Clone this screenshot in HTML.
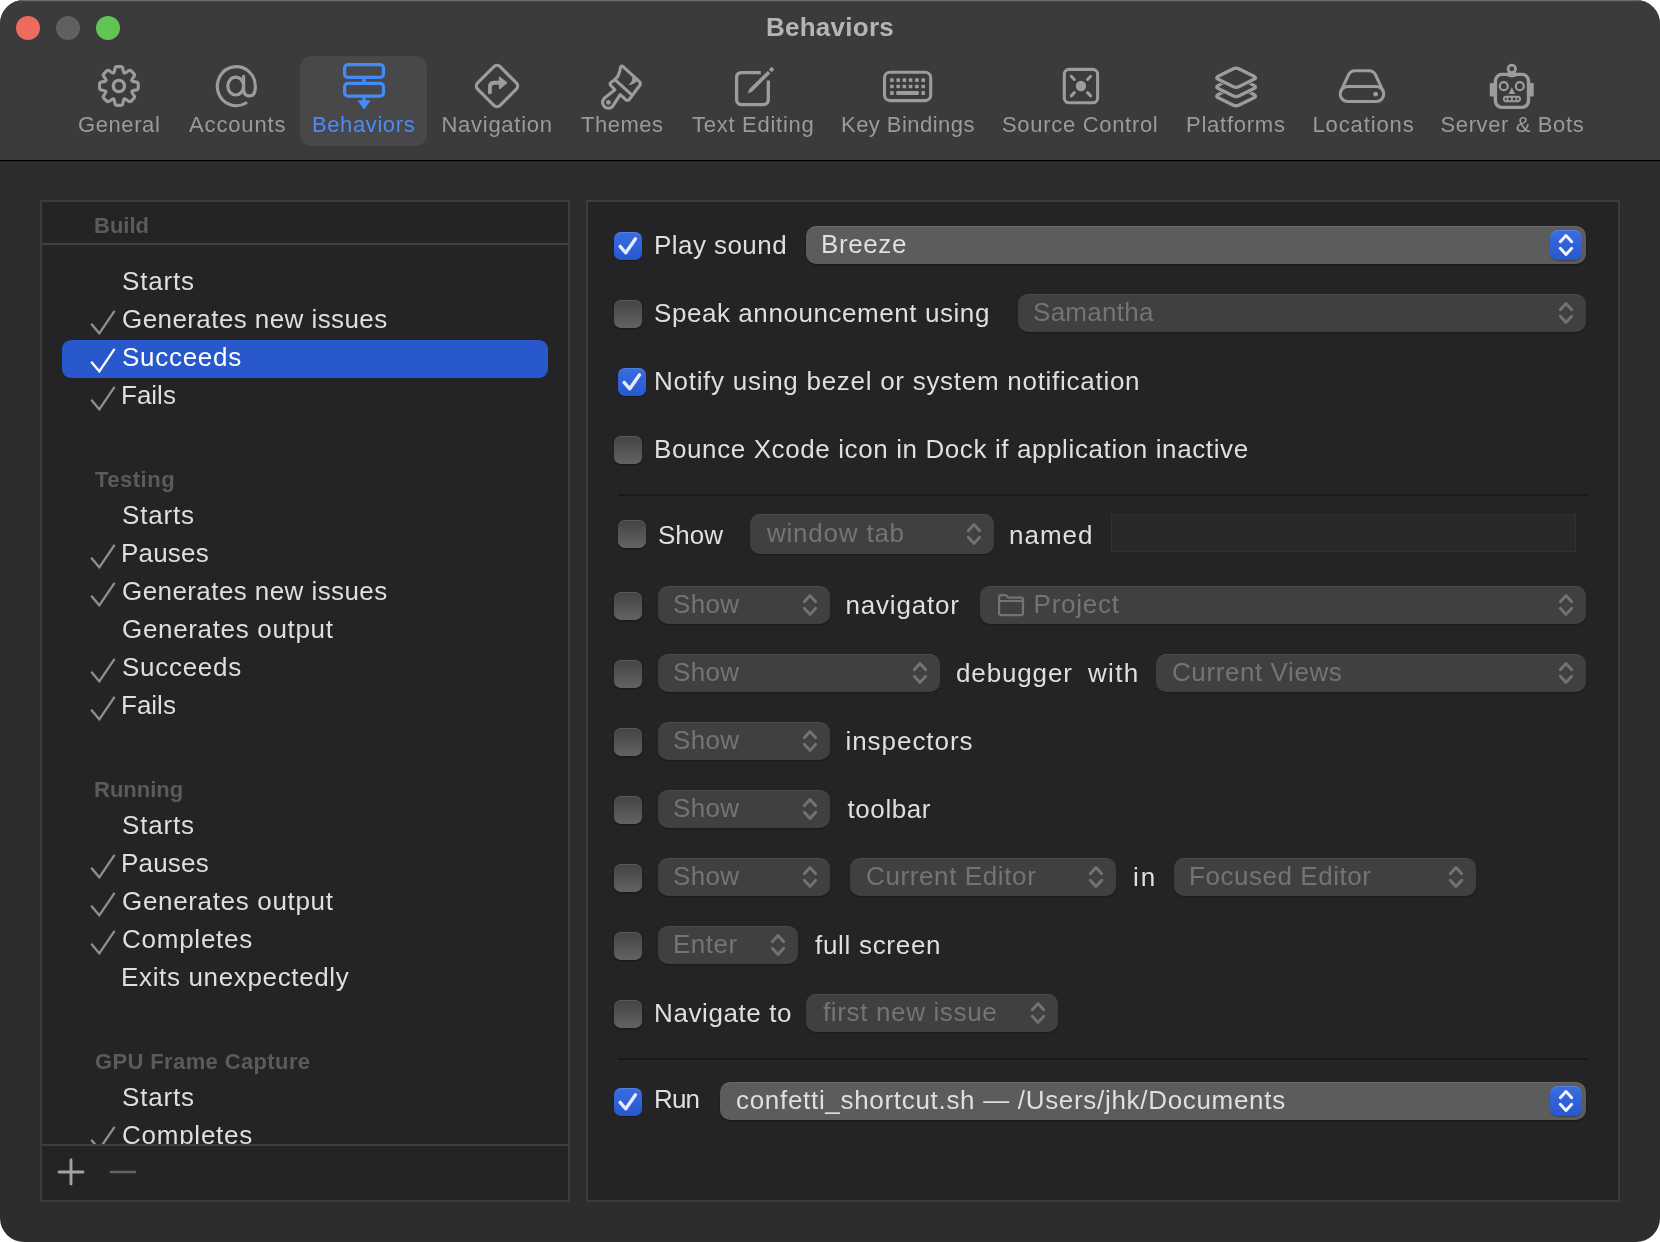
<!DOCTYPE html>
<html><head><meta charset="utf-8"><title>Behaviors</title>
<style>
html,body{margin:0;padding:0;background:#ffffff;}
body{width:1660px;height:1242px;overflow:hidden;position:relative;font-family:"Liberation Sans",sans-serif;}
#win{will-change:transform;position:absolute;left:0;top:0;width:1660px;height:1242px;border-radius:24px;overflow:hidden;background:#2d2d2f;}
.t{position:absolute;white-space:pre;line-height:1;}
svg{position:absolute;overflow:visible;}

.cb{position:absolute;width:28px;height:28px;border-radius:7px;box-sizing:border-box;}
.cb.off{background:linear-gradient(#434345,#636365);box-shadow:0 1px 1.5px rgba(0,0,0,.4), inset 0 1px 0 rgba(255,255,255,.13);}
.cb.on{background:linear-gradient(#3a6de0,#2757cf);box-shadow:0 1px 1px rgba(0,0,0,.35), inset 0 1px 0 rgba(255,255,255,.12);}
.pop{position:absolute;border-radius:10px;box-sizing:border-box;}
.pop.dis{background:#404042;box-shadow:0 1px 1.5px rgba(0,0,0,.3), inset 0 1px 0 rgba(255,255,255,.06);}
.pop.en{background:#5c5c5e;box-shadow:0 1px 1.5px rgba(0,0,0,.45), inset 0 1px 0 rgba(255,255,255,.08);}
.step{position:absolute;width:32px;height:30px;border-radius:8px;background:linear-gradient(#3a6de0,#2757cf);box-shadow:0 1px 1px rgba(0,0,0,.3), inset 0 1px 0 rgba(255,255,255,.15);}

</style></head><body><div id="win">
<div class="" style="position:absolute;left:0px;top:0px;width:1660px;height:160px;background:#3b3b3d;"></div>
<div class="" style="position:absolute;left:0px;top:0px;width:1660px;height:1px;background:#69696b;"></div>
<div class="" style="position:absolute;left:0px;top:1px;width:1660px;height:1px;background:#4a4a4c;"></div>
<div class="" style="position:absolute;left:0px;top:160px;width:1660px;height:1px;background:#000;"></div>
<div class="" style="position:absolute;left:0px;top:161px;width:1660px;height:1px;background:#252527;"></div>
<div class="" style="position:absolute;left:16px;top:16px;width:24px;height:24px;border-radius:50%;background:#ec6a5e;"></div>
<div class="" style="position:absolute;left:56px;top:16px;width:24px;height:24px;border-radius:50%;background:#606062;"></div>
<div class="" style="position:absolute;left:96px;top:16px;width:24px;height:24px;border-radius:50%;background:#61c554;"></div>
<span class="t" style="left:766.00px;top:14.49px;font-size:26px;letter-spacing:0.250px;color:#b5b5b7;font-weight:bold;">Behaviors</span>
<div class="" style="position:absolute;left:300px;top:56px;width:127px;height:90px;border-radius:12px;background:#48484a;"></div>
<span class="t" style="left:78.00px;top:113.88px;font-size:22px;letter-spacing:0.583px;color:#9b9b9d;">General</span>
<span class="t" style="left:189.00px;top:113.88px;font-size:22px;letter-spacing:0.857px;color:#9b9b9d;">Accounts</span>
<span class="t" style="left:312.00px;top:113.88px;font-size:22px;letter-spacing:0.600px;color:#4a8cf7;">Behaviors</span>
<span class="t" style="left:441.50px;top:113.88px;font-size:22px;letter-spacing:0.722px;color:#9b9b9d;">Navigation</span>
<span class="t" style="left:581.00px;top:113.88px;font-size:22px;letter-spacing:0.500px;color:#9b9b9d;">Themes</span>
<span class="t" style="left:692.00px;top:113.88px;font-size:22px;letter-spacing:0.727px;color:#9b9b9d;">Text Editing</span>
<span class="t" style="left:841.00px;top:113.88px;font-size:22px;letter-spacing:0.455px;color:#9b9b9d;">Key Bindings</span>
<span class="t" style="left:1002.00px;top:113.88px;font-size:22px;letter-spacing:0.692px;color:#9b9b9d;">Source Control</span>
<span class="t" style="left:1186.00px;top:113.88px;font-size:22px;letter-spacing:0.750px;color:#9b9b9d;">Platforms</span>
<span class="t" style="left:1312.50px;top:113.88px;font-size:22px;letter-spacing:0.875px;color:#9b9b9d;">Locations</span>
<span class="t" style="left:1440.50px;top:113.88px;font-size:22px;letter-spacing:0.625px;color:#9b9b9d;">Server &amp; Bots</span>
<svg style="left:79px;top:56px" width="80" height="60" viewBox="0 0 80 60"><path d="M34.55 17.08 Q35.16 16.83 35.50 14.96 L35.94 12.51 Q36.28 10.64 38.18 10.64 L41.62 10.64 Q43.52 10.64 43.86 12.51 L44.30 14.96 Q44.64 16.83 45.25 17.08 L45.25 17.08 Q45.86 17.33 47.42 16.25 L49.47 14.83 Q51.03 13.75 52.37 15.09 L54.81 17.53 Q56.15 18.87 55.07 20.43 L53.65 22.48 Q52.57 24.04 52.82 24.65 L52.82 24.65 Q53.07 25.26 54.94 25.60 L57.39 26.04 Q59.26 26.38 59.26 28.28 L59.26 31.72 Q59.26 33.62 57.39 33.96 L54.94 34.40 Q53.07 34.74 52.82 35.35 L52.82 35.35 Q52.57 35.96 53.65 37.52 L55.07 39.57 Q56.15 41.13 54.81 42.47 L52.37 44.91 Q51.03 46.25 49.47 45.17 L47.42 43.75 Q45.86 42.67 45.25 42.92 L45.25 42.92 Q44.64 43.17 44.30 45.04 L43.86 47.49 Q43.52 49.36 41.62 49.36 L38.18 49.36 Q36.28 49.36 35.94 47.49 L35.50 45.04 Q35.16 43.17 34.55 42.92 L34.55 42.92 Q33.94 42.67 32.38 43.75 L30.33 45.17 Q28.77 46.25 27.43 44.91 L24.99 42.47 Q23.65 41.13 24.73 39.57 L26.15 37.52 Q27.23 35.96 26.98 35.35 L26.98 35.35 Q26.73 34.74 24.86 34.40 L22.41 33.96 Q20.54 33.62 20.54 31.72 L20.54 28.28 Q20.54 26.38 22.41 26.04 L24.86 25.60 Q26.73 25.26 26.98 24.65 L26.98 24.65 Q27.23 24.04 26.15 22.48 L24.73 20.43 Q23.65 18.87 24.99 17.53 L27.43 15.09 Q28.77 13.75 30.33 14.83 L32.38 16.25 Q33.94 17.33 34.55 17.08 Z" fill="none" stroke="#9c9c9e" stroke-width="3.1" stroke-linecap="round" stroke-linejoin="round" /><circle cx="39.9" cy="30.0" r="5.6" fill="none" stroke="#9c9c9e" stroke-width="3.4"/></svg>
<svg style="left:197px;top:56px" width="80" height="60" viewBox="0 0 80 60"><path d="M 48.9 47.0 A 19 19.5 0 1 1 58.3 30.9 C 58.3 36.9 56 39.9 52.4 39.9 C 48.6 39.9 46.6 37.5 46.6 33 L 46.6 20.3" fill="none" stroke="#9c9c9e" stroke-width="3.2" stroke-linecap="round" stroke-linejoin="round" /><ellipse cx="38.7" cy="30.1" rx="7.9" ry="8.9" fill="none" stroke="#9c9c9e" stroke-width="3.2"/></svg>
<svg style="left:323px;top:56px" width="80" height="60" viewBox="0 0 80 60"><rect x="21.6" y="8.6" width="38.9" height="12.8" rx="3.4" fill="none" stroke="#448af8" stroke-width="3.2"/><rect x="21.6" y="27.4" width="38.9" height="12.8" rx="3.4" fill="none" stroke="#448af8" stroke-width="3.2"/><path d="M41.1 21.4 V27.4 M41.1 40.2 V46" stroke="#448af8" stroke-width="3.4" fill="none"/><path d="M35.9 45 L46.3 45 L41.1 52.3 Z" fill="#448af8" stroke="#448af8" stroke-width="1.6" stroke-linejoin="round"/></svg>
<svg style="left:457px;top:56px" width="80" height="60" viewBox="0 0 80 60"><rect x="24.1" y="14.2" width="31.8" height="31.8" rx="4.4" fill="none" stroke="#9c9c9e" stroke-width="3.2" transform="rotate(45 40 30.1)"/><path d="M32.9 36.4 V31 Q32.9 26.8 37.1 26.8 H43" fill="none" stroke="#9c9c9e" stroke-width="3.9" stroke-linecap="round" stroke-linejoin="round" /><path d="M42.6 21.2 L49.6 26.8 L42.6 32.6 Z" fill="#9c9c9e" stroke="#9c9c9e" stroke-width="1.4" stroke-linejoin="round"/></svg>
<svg style="left:582px;top:56px" width="80" height="60" viewBox="0 0 80 60"><path d="M 38.3 12.2 Q 38.9 8.6 41.6 11.1 L 57.2 25.3 Q 59.4 27.4 57.5 29.7 L 47.4 43.2 Q 45.7 45.3 43.6 43.5 L 38.2 38.6 L 30.6 50.4 A 5.8 5.8 0 1 1 22.2 42.3 L 32.9 33.8 L 28.6 29.2 Q 27.4 27.8 28.8 26.6 L 32.9 23.7 Q 37.4 19.5 38.3 12.2 Z" fill="none" stroke="#9c9c9e" stroke-width="3.1" stroke-linecap="round" stroke-linejoin="round" /><path d="M 32.9 23.7 L 48.9 38.2" fill="none" stroke="#9c9c9e" stroke-width="3.1" stroke-linecap="round" stroke-linejoin="round" /><path d="M 50.3 20.0 L 55.3 24.7 Q 52.5 28.6 46.2 29.2 Q 51 26.2 50.3 20.0 Z" fill="#9c9c9e"/><circle cx="26.4" cy="46.4" r="2.4" fill="#9c9c9e"/></svg>
<svg style="left:712px;top:56px" width="80" height="60" viewBox="0 0 80 60"><path d="M 48.8 16.6 H 29.6 Q 24.6 16.6 24.6 21.6 V 43.6 Q 24.6 48.6 29.6 48.6 H 51.3 Q 56.3 48.6 56.3 43.6 V 24.4" fill="none" stroke="#9c9c9e" stroke-width="3.3" stroke-linejoin="round" stroke-linecap="butt"/><path d="M 35.6 37.4 L 37.3 32.9 L 55.8 14.9 L 58.4 17.5 L 40.0 35.7 Z" fill="#9c9c9e"/><path d="M 59.6 10.8 L 62.3 13.5 L 59.6 16.2 L 56.9 13.5 Z" fill="#9c9c9e"/></svg>
<svg style="left:867px;top:56px" width="80" height="60" viewBox="0 0 80 60"><rect x="17.5" y="16.3" width="46.2" height="28.3" rx="5.6" fill="none" stroke="#9c9c9e" stroke-width="3.1"/><rect x="23.10" y="22.35" width="3.6" height="3.6" rx="0.7" fill="#9c9c9e"/><rect x="29.40" y="22.35" width="3.6" height="3.6" rx="0.7" fill="#9c9c9e"/><rect x="35.55" y="22.35" width="3.6" height="3.6" rx="0.7" fill="#9c9c9e"/><rect x="41.80" y="22.35" width="3.6" height="3.6" rx="0.7" fill="#9c9c9e"/><rect x="48.10" y="22.35" width="3.6" height="3.6" rx="0.7" fill="#9c9c9e"/><rect x="54.40" y="22.35" width="3.6" height="3.6" rx="0.7" fill="#9c9c9e"/><rect x="23.10" y="28.70" width="3.6" height="3.6" rx="0.7" fill="#9c9c9e"/><rect x="29.40" y="28.70" width="3.6" height="3.6" rx="0.7" fill="#9c9c9e"/><rect x="35.55" y="28.70" width="3.6" height="3.6" rx="0.7" fill="#9c9c9e"/><rect x="41.80" y="28.70" width="3.6" height="3.6" rx="0.7" fill="#9c9c9e"/><rect x="48.10" y="28.70" width="3.6" height="3.6" rx="0.7" fill="#9c9c9e"/><rect x="54.40" y="28.70" width="3.6" height="3.6" rx="0.7" fill="#9c9c9e"/><rect x="23.10" y="35.10" width="3.6" height="3.8" rx="0.7" fill="#9c9c9e"/><rect x="54.40" y="35.10" width="3.6" height="3.8" rx="0.7" fill="#9c9c9e"/><rect x="29.2" y="35.0" width="22.7" height="3.9" rx="1.2" fill="#9c9c9e"/></svg>
<svg style="left:1041px;top:56px" width="80" height="60" viewBox="0 0 80 60"><rect x="23.3" y="13.4" width="33.3" height="33.3" rx="4.8" fill="none" stroke="#9c9c9e" stroke-width="3.1"/><circle cx="39.95" cy="30.05" r="5.2" fill="#9c9c9e"/><path d="M33.35 23.45 L30.25 20.25 M33.35 36.65 L30.25 39.85 M46.55 23.45 L49.65 20.25 M46.55 36.65 L49.65 39.85 " fill="none" stroke="#9c9c9e" stroke-width="3.0" stroke-linecap="round" stroke-linejoin="round" /></svg>
<svg style="left:1196px;top:56px" width="80" height="60" viewBox="0 0 80 60"><path d="M22.25 41.71 Q19.10 40.15 22.25 38.59 L36.95 31.31 Q40.10 29.75 43.25 31.31 L57.95 38.59 Q61.10 40.15 57.95 41.71 L43.25 48.99 Q40.10 50.55 36.95 48.99 Z" fill="#3b3b3d" stroke="#3b3b3d" stroke-width="4.6" stroke-linejoin="round"/><path d="M22.25 41.71 Q19.10 40.15 22.25 38.59 L36.95 31.31 Q40.10 29.75 43.25 31.31 L57.95 38.59 Q61.10 40.15 57.95 41.71 L43.25 48.99 Q40.10 50.55 36.95 48.99 Z" fill="none" stroke="#9c9c9e" stroke-width="3.3" stroke-linecap="round" stroke-linejoin="round" /><path d="M22.25 32.51 Q19.10 30.95 22.25 29.39 L36.95 22.11 Q40.10 20.55 43.25 22.11 L57.95 29.39 Q61.10 30.95 57.95 32.51 L43.25 39.79 Q40.10 41.35 36.95 39.79 Z" fill="#3b3b3d" stroke="#3b3b3d" stroke-width="4.6" stroke-linejoin="round"/><path d="M22.25 32.51 Q19.10 30.95 22.25 29.39 L36.95 22.11 Q40.10 20.55 43.25 22.11 L57.95 29.39 Q61.10 30.95 57.95 32.51 L43.25 39.79 Q40.10 41.35 36.95 39.79 Z" fill="none" stroke="#9c9c9e" stroke-width="3.3" stroke-linecap="round" stroke-linejoin="round" /><path d="M22.25 23.31 Q19.10 21.75 22.25 20.19 L36.95 12.91 Q40.10 11.35 43.25 12.91 L57.95 20.19 Q61.10 21.75 57.95 23.31 L43.25 30.59 Q40.10 32.15 36.95 30.59 Z" fill="#3b3b3d" stroke="#3b3b3d" stroke-width="4.6" stroke-linejoin="round"/><path d="M22.25 23.31 Q19.10 21.75 22.25 20.19 L36.95 12.91 Q40.10 11.35 43.25 12.91 L57.95 20.19 Q61.10 21.75 57.95 23.31 L43.25 30.59 Q40.10 32.15 36.95 30.59 Z" fill="none" stroke="#9c9c9e" stroke-width="3.3" stroke-linecap="round" stroke-linejoin="round" /></svg>
<svg style="left:1322px;top:56px" width="80" height="60" viewBox="0 0 80 60"><rect x="18.2" y="30.5" width="43.6" height="15" rx="7.5" fill="none" stroke="#9c9c9e" stroke-width="3.1"/><path d="M 18.7 35.6 L 26.6 18.7 Q 28.5 14.7 33 14.7 L 47 14.7 Q 51.5 14.7 53.4 18.7 L 61.3 35.6" fill="none" stroke="#9c9c9e" stroke-width="3.1" stroke-linecap="round" stroke-linejoin="round" /><circle cx="53.6" cy="38.2" r="2.4" fill="#9c9c9e"/></svg>
<svg style="left:1471px;top:56px" width="80" height="60" viewBox="0 0 80 60"><rect x="24.4" y="18.4" width="33.1" height="33" rx="6.6" fill="none" stroke="#9c9c9e" stroke-width="3.4"/><circle cx="40.8" cy="12.8" r="3.75" fill="none" stroke="#9c9c9e" stroke-width="2.7"/><ellipse cx="40.8" cy="18.6" rx="6" ry="2.8" fill="#9c9c9e"/><rect x="18.8" y="27.0" width="4.4" height="13.6" rx="0.8" fill="#9c9c9e"/><rect x="58.6" y="27.0" width="4.1" height="13.6" rx="0.8" fill="#9c9c9e"/><circle cx="32.75" cy="30.2" r="4.0" fill="none" stroke="#9c9c9e" stroke-width="2.2"/><circle cx="48.8" cy="30.2" r="4.0" fill="none" stroke="#9c9c9e" stroke-width="2.2"/><path d="M40.8 31.2 L44.1 37.9 L37.6 37.9 Z" fill="#9c9c9e"/><rect x="32.8" y="40.75" width="16.3" height="4.5" rx="2.25" fill="none" stroke="#9c9c9e" stroke-width="1.8"/><path d="M36.4 40.7 V45.3 M40.9 40.7 V45.3 M45.4 40.7 V45.3" stroke="#9c9c9e" stroke-width="1.7" fill="none"/></svg>
<div class="" style="position:absolute;left:40px;top:200px;width:530px;height:1002px;background:#242426;box-sizing:border-box;border:2px solid #3c3c3e;"></div>
<div class="" style="position:absolute;left:42px;top:243px;width:526px;height:2px;background:#414143;"></div>
<div class="" style="position:absolute;left:42px;top:1144px;width:526px;height:2px;background:#3e3e40;"></div>
<div class="" style="position:absolute;left:62px;top:340px;width:486px;height:38px;border-radius:9px;background:#2858cb;"></div>
<span class="t" style="left:94.00px;top:214.88px;font-size:22px;letter-spacing:0.000px;color:#5b5b5d;font-weight:bold;">Build</span>
<span class="t" style="left:122.00px;top:268.49px;font-size:26px;letter-spacing:0.800px;color:#dfdfe0;">Starts</span>
<span class="t" style="left:122.00px;top:306.49px;font-size:26px;letter-spacing:0.421px;color:#dfdfe0;">Generates new issues</span>
<svg style="left:90px;top:308.0px" width="30" height="30" viewBox="0 0 30 30"><path d="M1.2 15.8 L9.3 25.3 L24.6 2.8" fill="none" stroke="#8f8f91" stroke-width="2.3" stroke-linecap="butt" stroke-linejoin="miter"/></svg>
<span class="t" style="left:122.00px;top:344.49px;font-size:26px;letter-spacing:0.714px;color:#ffffff;">Succeeds</span>
<svg style="left:90px;top:346.0px" width="30" height="30" viewBox="0 0 30 30"><path d="M1.2 15.8 L9.3 25.3 L24.6 2.8" fill="none" stroke="#ffffff" stroke-width="2.3" stroke-linecap="butt" stroke-linejoin="miter"/></svg>
<span class="t" style="left:121.00px;top:382.49px;font-size:26px;letter-spacing:0.000px;color:#dfdfe0;">Fails</span>
<svg style="left:90px;top:384.0px" width="30" height="30" viewBox="0 0 30 30"><path d="M1.2 15.8 L9.3 25.3 L24.6 2.8" fill="none" stroke="#8f8f91" stroke-width="2.3" stroke-linecap="butt" stroke-linejoin="miter"/></svg>
<span class="t" style="left:95.00px;top:469.38px;font-size:22px;letter-spacing:0.500px;color:#5b5b5d;font-weight:bold;">Testing</span>
<span class="t" style="left:122.00px;top:502.49px;font-size:26px;letter-spacing:0.800px;color:#dfdfe0;">Starts</span>
<span class="t" style="left:121.00px;top:540.49px;font-size:26px;letter-spacing:0.200px;color:#dfdfe0;">Pauses</span>
<svg style="left:90px;top:542.0px" width="30" height="30" viewBox="0 0 30 30"><path d="M1.2 15.8 L9.3 25.3 L24.6 2.8" fill="none" stroke="#8f8f91" stroke-width="2.3" stroke-linecap="butt" stroke-linejoin="miter"/></svg>
<span class="t" style="left:122.00px;top:578.49px;font-size:26px;letter-spacing:0.421px;color:#dfdfe0;">Generates new issues</span>
<svg style="left:90px;top:580.0px" width="30" height="30" viewBox="0 0 30 30"><path d="M1.2 15.8 L9.3 25.3 L24.6 2.8" fill="none" stroke="#8f8f91" stroke-width="2.3" stroke-linecap="butt" stroke-linejoin="miter"/></svg>
<span class="t" style="left:122.00px;top:616.49px;font-size:26px;letter-spacing:0.667px;color:#dfdfe0;">Generates output</span>
<span class="t" style="left:122.00px;top:654.49px;font-size:26px;letter-spacing:0.714px;color:#dfdfe0;">Succeeds</span>
<svg style="left:90px;top:656.0px" width="30" height="30" viewBox="0 0 30 30"><path d="M1.2 15.8 L9.3 25.3 L24.6 2.8" fill="none" stroke="#8f8f91" stroke-width="2.3" stroke-linecap="butt" stroke-linejoin="miter"/></svg>
<span class="t" style="left:121.00px;top:692.49px;font-size:26px;letter-spacing:0.000px;color:#dfdfe0;">Fails</span>
<svg style="left:90px;top:694.0px" width="30" height="30" viewBox="0 0 30 30"><path d="M1.2 15.8 L9.3 25.3 L24.6 2.8" fill="none" stroke="#8f8f91" stroke-width="2.3" stroke-linecap="butt" stroke-linejoin="miter"/></svg>
<span class="t" style="left:94.00px;top:779.38px;font-size:22px;letter-spacing:0.000px;color:#5b5b5d;font-weight:bold;">Running</span>
<span class="t" style="left:122.00px;top:812.49px;font-size:26px;letter-spacing:0.800px;color:#dfdfe0;">Starts</span>
<span class="t" style="left:121.00px;top:850.49px;font-size:26px;letter-spacing:0.200px;color:#dfdfe0;">Pauses</span>
<svg style="left:90px;top:852.0px" width="30" height="30" viewBox="0 0 30 30"><path d="M1.2 15.8 L9.3 25.3 L24.6 2.8" fill="none" stroke="#8f8f91" stroke-width="2.3" stroke-linecap="butt" stroke-linejoin="miter"/></svg>
<span class="t" style="left:122.00px;top:888.49px;font-size:26px;letter-spacing:0.667px;color:#dfdfe0;">Generates output</span>
<svg style="left:90px;top:890.0px" width="30" height="30" viewBox="0 0 30 30"><path d="M1.2 15.8 L9.3 25.3 L24.6 2.8" fill="none" stroke="#8f8f91" stroke-width="2.3" stroke-linecap="butt" stroke-linejoin="miter"/></svg>
<span class="t" style="left:122.00px;top:926.49px;font-size:26px;letter-spacing:0.750px;color:#dfdfe0;">Completes</span>
<svg style="left:90px;top:928.0px" width="30" height="30" viewBox="0 0 30 30"><path d="M1.2 15.8 L9.3 25.3 L24.6 2.8" fill="none" stroke="#8f8f91" stroke-width="2.3" stroke-linecap="butt" stroke-linejoin="miter"/></svg>
<span class="t" style="left:121.00px;top:964.49px;font-size:26px;letter-spacing:0.647px;color:#dfdfe0;">Exits unexpectedly</span>
<span class="t" style="left:95.00px;top:1050.88px;font-size:22px;letter-spacing:0.375px;color:#5b5b5d;font-weight:bold;">GPU Frame Capture</span>
<div style="position:absolute;left:42px;top:1040px;width:526px;height:104px;overflow:hidden;"><div style="position:absolute;left:-42px;top:-1040px;">
<span class="t" style="left:122.00px;top:1083.99px;font-size:26px;letter-spacing:0.800px;color:#dfdfe0;">Starts</span>
<span class="t" style="left:122.00px;top:1121.99px;font-size:26px;letter-spacing:0.750px;color:#dfdfe0;">Completes</span>
<svg style="left:90px;top:1123.5px" width="30" height="30" viewBox="0 0 30 30"><path d="M1.2 15.8 L9.3 25.3 L24.6 2.8" fill="none" stroke="#8f8f91" stroke-width="2.3" stroke-linecap="butt" stroke-linejoin="miter"/></svg>
</div></div>
<svg style="left:56.8px;top:1158.3px" width="28" height="28" viewBox="0 0 28 28"><path d="M2 14 H26 M14 2 V26" stroke="#a3a3a5" stroke-width="2.9" stroke-linecap="round" fill="none"/></svg>
<svg style="left:108.8px;top:1158.4px" width="28" height="28" viewBox="0 0 28 28"><path d="M2 14 H26" stroke="#646466" stroke-width="2.7" stroke-linecap="round" fill="none"/></svg>
<div class="" style="position:absolute;left:586px;top:200px;width:1034px;height:1002px;background:#242426;box-sizing:border-box;border:2px solid #3c3c3e;"></div>
<div class="cb on" style="left:614px;top:232px;"></div>
<svg style="left:614px;top:232px" width="28" height="28" viewBox="0 0 28 28"><path d="M6.1 14.4 L11.8 20.8 L21.5 6.8" fill="none" stroke="#e5ebfc" stroke-width="3.4" stroke-linecap="round" stroke-linejoin="round"/></svg>
<span class="t" style="left:654.00px;top:232.49px;font-size:26px;letter-spacing:0.444px;color:#dfdfe0;">Play sound</span>
<div class="pop en" style="left:806px;top:226px;width:780px;height:38px;"></div>
<div class="step" style="left:1550px;top:230px;"></div>
<svg style="left:1558px;top:233.4px" width="16" height="24" viewBox="0 0 16 24"><path d="M2.3 8.65 L8 2.45 L13.7 8.65 M2.3 15.35 L8 21.55 L13.7 15.35" fill="none" stroke="#f2f5ff" stroke-width="2.9" stroke-linecap="round" stroke-linejoin="round"/></svg>
<span class="t" style="left:821.00px;top:230.99px;font-size:26px;letter-spacing:0.600px;color:#dfdfe0;">Breeze</span>
<div class="cb off" style="left:614px;top:300px;"></div>
<span class="t" style="left:654.00px;top:300.49px;font-size:26px;letter-spacing:0.565px;color:#dfdfe0;">Speak announcement using</span>
<div class="pop dis" style="left:1018px;top:294px;width:568px;height:38px;"></div>
<svg style="left:1558px;top:301.1px" width="16" height="24" viewBox="0 0 16 24"><path d="M2.3 8.65 L8 2.45 L13.7 8.65 M2.3 15.35 L8 21.55 L13.7 15.35" fill="none" stroke="#727274" stroke-width="2.9" stroke-linecap="round" stroke-linejoin="round"/></svg>
<span class="t" style="left:1033.00px;top:298.99px;font-size:26px;letter-spacing:0.286px;color:#747476;">Samantha</span>
<div class="cb on" style="left:618px;top:368px;"></div>
<svg style="left:618px;top:368px" width="28" height="28" viewBox="0 0 28 28"><path d="M6.1 14.4 L11.8 20.8 L21.5 6.8" fill="none" stroke="#e5ebfc" stroke-width="3.4" stroke-linecap="round" stroke-linejoin="round"/></svg>
<span class="t" style="left:654.00px;top:368.49px;font-size:26px;letter-spacing:0.722px;color:#dfdfe0;">Notify using bezel or system notification</span>
<div class="cb off" style="left:614px;top:436px;"></div>
<span class="t" style="left:654.00px;top:436.49px;font-size:26px;letter-spacing:0.604px;color:#dfdfe0;">Bounce Xcode icon in Dock if application inactive</span>
<div class="" style="position:absolute;left:618px;top:494px;width:970px;height:2px;background:#19191b;"></div>
<div class="cb off" style="left:618px;top:520px;"></div>
<span class="t" style="left:658.00px;top:522.49px;font-size:26px;letter-spacing:0.000px;color:#dfdfe0;">Show</span>
<div class="pop dis" style="left:750px;top:514px;width:244px;height:40px;"></div>
<svg style="left:966px;top:522.1px" width="16" height="24" viewBox="0 0 16 24"><path d="M2.3 8.65 L8 2.45 L13.7 8.65 M2.3 15.35 L8 21.55 L13.7 15.35" fill="none" stroke="#727274" stroke-width="2.9" stroke-linecap="round" stroke-linejoin="round"/></svg>
<span class="t" style="left:767.00px;top:520.49px;font-size:26px;letter-spacing:0.778px;color:#747476;">window tab</span>
<span class="t" style="left:1009.00px;top:522.49px;font-size:26px;letter-spacing:1.000px;color:#dfdfe0;">named</span>
<div class="" style="position:absolute;left:1111px;top:514px;width:465px;height:38px;background:#29292b;box-sizing:border-box;border:1px solid #313133;"></div>
<div class="cb off" style="left:614px;top:592px;"></div>
<div class="pop dis" style="left:658px;top:586px;width:172px;height:38px;"></div>
<svg style="left:802px;top:593.1px" width="16" height="24" viewBox="0 0 16 24"><path d="M2.3 8.65 L8 2.45 L13.7 8.65 M2.3 15.35 L8 21.55 L13.7 15.35" fill="none" stroke="#727274" stroke-width="2.9" stroke-linecap="round" stroke-linejoin="round"/></svg>
<span class="t" style="left:673.00px;top:590.99px;font-size:26px;letter-spacing:0.333px;color:#747476;">Show</span>
<span class="t" style="left:845.50px;top:592.49px;font-size:26px;letter-spacing:0.812px;color:#dfdfe0;">navigator</span>
<div class="pop dis" style="left:980px;top:586px;width:606px;height:38px;"></div>
<svg style="left:1558px;top:593.1px" width="16" height="24" viewBox="0 0 16 24"><path d="M2.3 8.65 L8 2.45 L13.7 8.65 M2.3 15.35 L8 21.55 L13.7 15.35" fill="none" stroke="#727274" stroke-width="2.9" stroke-linecap="round" stroke-linejoin="round"/></svg>
<span class="t" style="left:1033.60px;top:590.99px;font-size:26px;letter-spacing:0.733px;color:#747476;">Project</span>
<svg style="left:997px;top:592px" width="28" height="26" viewBox="0 0 28 26"><path d="M2.1 5.3 Q2.1 3.1 4.3 3.1 H8.2 Q9.2 3.1 10 4.2 L10.6 5.0 Q11.3 5.7 12.4 5.7 H23.8 Q26 5.7 26 7.9 V20.9 Q26 23.1 23.8 23.1 H4.3 Q2.1 23.1 2.1 20.9 Z M2.1 9.0 H26" fill="none" stroke="#747476" stroke-width="2.2" stroke-linejoin="round"/></svg>
<div class="cb off" style="left:614px;top:660px;"></div>
<div class="pop dis" style="left:658px;top:654px;width:282px;height:38px;"></div>
<svg style="left:912px;top:661.1px" width="16" height="24" viewBox="0 0 16 24"><path d="M2.3 8.65 L8 2.45 L13.7 8.65 M2.3 15.35 L8 21.55 L13.7 15.35" fill="none" stroke="#727274" stroke-width="2.9" stroke-linecap="round" stroke-linejoin="round"/></svg>
<span class="t" style="left:673.00px;top:658.99px;font-size:26px;letter-spacing:0.333px;color:#747476;">Show</span>
<span class="t" style="left:956.00px;top:660.49px;font-size:26px;letter-spacing:0.857px;color:#dfdfe0;">debugger</span>
<span class="t" style="left:1088.00px;top:660.49px;font-size:26px;letter-spacing:1.333px;color:#dfdfe0;">with</span>
<div class="pop dis" style="left:1156px;top:654px;width:430px;height:38px;"></div>
<svg style="left:1558px;top:661.1px" width="16" height="24" viewBox="0 0 16 24"><path d="M2.3 8.65 L8 2.45 L13.7 8.65 M2.3 15.35 L8 21.55 L13.7 15.35" fill="none" stroke="#727274" stroke-width="2.9" stroke-linecap="round" stroke-linejoin="round"/></svg>
<span class="t" style="left:1172.00px;top:658.99px;font-size:26px;letter-spacing:0.583px;color:#747476;">Current Views</span>
<div class="cb off" style="left:614px;top:728px;"></div>
<div class="pop dis" style="left:658px;top:722px;width:172px;height:38px;"></div>
<svg style="left:802px;top:729.1px" width="16" height="24" viewBox="0 0 16 24"><path d="M2.3 8.65 L8 2.45 L13.7 8.65 M2.3 15.35 L8 21.55 L13.7 15.35" fill="none" stroke="#727274" stroke-width="2.9" stroke-linecap="round" stroke-linejoin="round"/></svg>
<span class="t" style="left:673.00px;top:726.99px;font-size:26px;letter-spacing:0.333px;color:#747476;">Show</span>
<span class="t" style="left:845.50px;top:728.49px;font-size:26px;letter-spacing:0.944px;color:#dfdfe0;">inspectors</span>
<div class="cb off" style="left:614px;top:796px;"></div>
<div class="pop dis" style="left:658px;top:790px;width:172px;height:38px;"></div>
<svg style="left:802px;top:797.1px" width="16" height="24" viewBox="0 0 16 24"><path d="M2.3 8.65 L8 2.45 L13.7 8.65 M2.3 15.35 L8 21.55 L13.7 15.35" fill="none" stroke="#727274" stroke-width="2.9" stroke-linecap="round" stroke-linejoin="round"/></svg>
<span class="t" style="left:673.00px;top:794.99px;font-size:26px;letter-spacing:0.333px;color:#747476;">Show</span>
<span class="t" style="left:847.50px;top:796.49px;font-size:26px;letter-spacing:0.583px;color:#dfdfe0;">toolbar</span>
<div class="cb off" style="left:614px;top:864px;"></div>
<div class="pop dis" style="left:658px;top:858px;width:172px;height:38px;"></div>
<svg style="left:802px;top:865.1px" width="16" height="24" viewBox="0 0 16 24"><path d="M2.3 8.65 L8 2.45 L13.7 8.65 M2.3 15.35 L8 21.55 L13.7 15.35" fill="none" stroke="#727274" stroke-width="2.9" stroke-linecap="round" stroke-linejoin="round"/></svg>
<span class="t" style="left:673.00px;top:862.99px;font-size:26px;letter-spacing:0.333px;color:#747476;">Show</span>
<div class="pop dis" style="left:850px;top:858px;width:266px;height:38px;"></div>
<svg style="left:1088px;top:865.1px" width="16" height="24" viewBox="0 0 16 24"><path d="M2.3 8.65 L8 2.45 L13.7 8.65 M2.3 15.35 L8 21.55 L13.7 15.35" fill="none" stroke="#727274" stroke-width="2.9" stroke-linecap="round" stroke-linejoin="round"/></svg>
<span class="t" style="left:866.00px;top:862.99px;font-size:26px;letter-spacing:0.615px;color:#747476;">Current Editor</span>
<span class="t" style="left:1133.00px;top:864.49px;font-size:26px;letter-spacing:2.000px;color:#dfdfe0;">in</span>
<div class="pop dis" style="left:1174px;top:858px;width:302px;height:38px;"></div>
<svg style="left:1448px;top:865.1px" width="16" height="24" viewBox="0 0 16 24"><path d="M2.3 8.65 L8 2.45 L13.7 8.65 M2.3 15.35 L8 21.55 L13.7 15.35" fill="none" stroke="#727274" stroke-width="2.9" stroke-linecap="round" stroke-linejoin="round"/></svg>
<span class="t" style="left:1189.00px;top:862.99px;font-size:26px;letter-spacing:0.538px;color:#747476;">Focused Editor</span>
<div class="cb off" style="left:614px;top:932px;"></div>
<div class="pop dis" style="left:658px;top:926px;width:140px;height:38px;"></div>
<svg style="left:770px;top:933.1px" width="16" height="24" viewBox="0 0 16 24"><path d="M2.3 8.65 L8 2.45 L13.7 8.65 M2.3 15.35 L8 21.55 L13.7 15.35" fill="none" stroke="#727274" stroke-width="2.9" stroke-linecap="round" stroke-linejoin="round"/></svg>
<span class="t" style="left:673.00px;top:930.99px;font-size:26px;letter-spacing:0.500px;color:#747476;">Enter</span>
<span class="t" style="left:815.00px;top:932.49px;font-size:26px;letter-spacing:0.700px;color:#dfdfe0;">full screen</span>
<div class="cb off" style="left:614px;top:1000px;"></div>
<span class="t" style="left:654.00px;top:1000.49px;font-size:26px;letter-spacing:0.600px;color:#dfdfe0;">Navigate to</span>
<div class="pop dis" style="left:806px;top:994px;width:252px;height:38px;"></div>
<svg style="left:1030px;top:1001.1px" width="16" height="24" viewBox="0 0 16 24"><path d="M2.3 8.65 L8 2.45 L13.7 8.65 M2.3 15.35 L8 21.55 L13.7 15.35" fill="none" stroke="#727274" stroke-width="2.9" stroke-linecap="round" stroke-linejoin="round"/></svg>
<span class="t" style="left:823.00px;top:998.99px;font-size:26px;letter-spacing:0.643px;color:#747476;">first new issue</span>
<div class="" style="position:absolute;left:618px;top:1058px;width:970px;height:2px;background:#19191b;"></div>
<div class="cb on" style="left:614px;top:1088px;"></div>
<svg style="left:614px;top:1088px" width="28" height="28" viewBox="0 0 28 28"><path d="M6.1 14.4 L11.8 20.8 L21.5 6.8" fill="none" stroke="#e5ebfc" stroke-width="3.4" stroke-linecap="round" stroke-linejoin="round"/></svg>
<span class="t" style="left:654.00px;top:1086.49px;font-size:26px;letter-spacing:-0.900px;color:#dfdfe0;">Run</span>
<div class="pop en" style="left:720px;top:1082px;width:866px;height:38px;"></div>
<div class="step" style="left:1550px;top:1086px;"></div>
<svg style="left:1558px;top:1089.4px" width="16" height="24" viewBox="0 0 16 24"><path d="M2.3 8.65 L8 2.45 L13.7 8.65 M2.3 15.35 L8 21.55 L13.7 15.35" fill="none" stroke="#f2f5ff" stroke-width="2.9" stroke-linecap="round" stroke-linejoin="round"/></svg>
<span class="t" style="left:736.00px;top:1086.99px;font-size:26px;letter-spacing:0.690px;color:#dfdfe0;">confetti_shortcut.sh — /Users/jhk/Documents</span>
</div></body></html>
